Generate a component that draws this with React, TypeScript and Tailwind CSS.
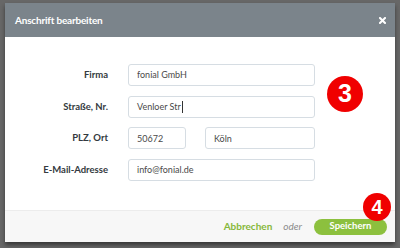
import React from 'react';

const rows = [
  { label: 'Firma', value: 'fonial GmbH' },
  { label: 'Straße, Nr.', value: 'Venloer Str', cursor: true },
];

const App = () => {
  return (
    <div className="w-[400px] h-[248px] bg-[#676767] pt-[3px] px-[5px] font-['Lato',sans-serif]">
      <div className="relative w-[390px] h-[239px] flex flex-col bg-white shadow-[0_3px_4px_rgba(0,0,0,0.45)]">
        {/* Header */}
        <div className="h-[34px] shrink-0 bg-[#7b848b] flex items-center justify-between pl-[10px] pr-[9px]">
          <span className="text-white text-[10px] font-bold tracking-[-0.2px]">Anschrift bearbeiten</span>
          <svg width="7" height="7" viewBox="0 0 7 7">
            <path d="M1 1L6 6M6 1L1 6" stroke="#fff" strokeWidth="2" strokeLinecap="square" />
          </svg>
        </div>

        {/* Body */}
        <div className="flex-1 pt-[27px]">
          <div className="grid grid-cols-[103px_187px] gap-x-[20px] gap-y-[9.7px] items-center">
            {rows.map((row) => (
              <React.Fragment key={row.label}>
                <div className="text-right text-[9.5px] font-bold text-[#333a40]">{row.label}</div>
                <div className="h-[22px] border border-[#d6dde3] rounded-[3px] flex items-center px-[8px] text-[9px] text-[#4a4a4a]">
                  {row.value}
                  {row.cursor && <span className="w-px h-[12px] bg-[#333] ml-px" />}
                </div>
              </React.Fragment>
            ))}
            <div className="text-right text-[9.5px] font-bold text-[#333a40]">PLZ, Ort</div>
            <div className="flex gap-[19px]">
              <div className="w-[58px] h-[22px] border border-[#d6dde3] rounded-[3px] flex items-center px-[8px] text-[9px] text-[#4a4a4a]">50672</div>
              <div className="w-[110px] h-[22px] border border-[#d6dde3] rounded-[3px] flex items-center px-[8px] text-[9px] text-[#4a4a4a]">Köln</div>
            </div>
            <div className="text-right text-[9.5px] font-bold text-[#333a40]">E-Mail-Adresse</div>
            <div className="h-[22px] border border-[#d6dde3] rounded-[3px] flex items-center px-[8px] text-[9px] text-[#4a4a4a]">info@fonial.de</div>
          </div>
        </div>

        {/* Footer */}
        <div className="h-[32px] shrink-0 bg-[#f7f7f7] border-t border-[#ececec] flex items-center justify-end pr-[8px]">
          <span className="text-[10px] font-bold text-[#86b83a]">Abbrechen</span>
          <span className="ml-[11px] text-[10px] italic text-[#8a8a8a]">oder</span>
          <button className="ml-[12px] w-[73px] h-[16px] rounded-full bg-[#8cc03e] text-white text-[9.5px] font-bold flex items-center justify-center">
            Speichern
          </button>
        </div>

        {/* Badges */}
        <div className="absolute left-[322px] top-[73px] w-[36px] h-[36px] rounded-full bg-[#f00000] flex items-center justify-center text-white text-[25px] font-bold font-['Liberation_Sans',sans-serif]">
          3
        </div>
        <div className="absolute left-[358px] top-[190px] w-[28px] h-[28px] rounded-full bg-[#f00000] flex items-center justify-center text-white text-[20px] font-bold font-['Liberation_Sans',sans-serif]">
          4
        </div>
      </div>
    </div>
  );
};

export default App;
